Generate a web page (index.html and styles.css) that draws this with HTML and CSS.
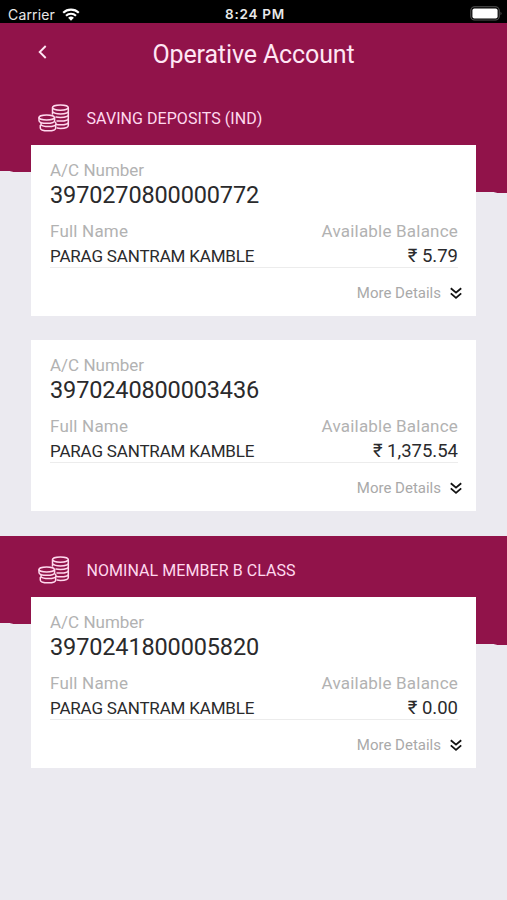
FILE: index.html
```html
<!DOCTYPE html>
<html lang="en">
<head>
<meta charset="utf-8">
<title>Operative Account</title>
<link rel="stylesheet" href="styles.css">
</head>
<body>
<svg class="defs" aria-hidden="true">
  <symbol id="coins" viewBox="0 0 32 28">
    <g fill="none" stroke="currentColor" stroke-width="1.500" stroke-linecap="round">
      <ellipse cx="22.400" cy="3.600" rx="7.900" ry="2.600"/>
      <path d="M14.500 4v6M30.300 4v17.500c0 1.700-3.400 2.900-7.900 2.900-1.200 0-2.300-.1-3.200-.3M14.600 7.700c1.200 1.400 4.200 2.200 7.800 2.200 4.400 0 7.900-1.200 7.900-2.900M18 13.100c1.300.3 2.800.4 4.400.4 4.400 0 7.900-1.200 7.900-2.900M19 16.900c1 .2 2.200.2 3.400.2 4.400 0 7.900-1.200 7.900-2.900M18.500 20.600c1.200.2 2.500.2 3.900.2 4.400 0 7.900-1.200 7.900-2.900"/>
      <ellipse cx="8.700" cy="13.500" rx="7.700" ry="2.500"/>
      <path d="M1 13.800v2.600c0 1.700 3.500 2.900 7.900 2.900s7.700-1.200 7.700-2.900v-2.600M3 18.600v2.200c1.300 1.200 4 1.800 7.100 1.800 4.400 0 7.900-1.200 7.900-2.900 0-.8-.5-1.500-1.400-2M2.300 21.400v2.500c0 1.700 3.500 2.900 7.900 2.900s7.500-1.200 7.500-2.900v-2.500"/>
    </g>
  </symbol>
  <symbol id="more" viewBox="0 0 12 13">
    <path d="M.8 1.200l5.200 4.400 5.200-4.400M.8 6.400l5.200 4.500 5.200-4.500" fill="none" stroke="currentColor" stroke-width="1.800"/>
  </symbol>
</svg>

<div class="status">
  <div class="carrier"><span>Carrier</span>
    <svg class="wifi" viewBox="0 0 18 13"><g fill="none" stroke="currentColor" stroke-width="2.100"><path d="M1.200 4.700a11.300 11.300 0 0 1 15.600 0M4 7.800a7.300 7.300 0 0 1 10 0"/></g><path d="M9 12.700l-2.900-2.900a4.200 4.200 0 0 1 5.800 0z" fill="currentColor"/></svg>
  </div>
  <time class="clock">8:24 PM</time>
  <svg class="battery" viewBox="0 0 32 15"><rect x=".8" y=".8" width="28.400" height="13.200" rx="3.800" fill="none" stroke="#555" stroke-width="1.100"/><rect x="2.400" y="2.600" width="25.200" height="9.800" rx="2" fill="#fff"/><path d="M30.600 5.500q1.600 1.900 0 3.800z" fill="#666"/></svg>
</div>

<header class="header">
  <svg class="back" viewBox="0 0 9 14"><path d="M7.700 1L1.700 7l6 6" fill="none" stroke="currentColor" stroke-width="1.900"/></svg>
  <h1 class="title">Operative Account</h1>
</header>

<main>
  <section class="group">
    <div class="group-head"><svg class="coins"><use href="#coins"/></svg><h2 class="group-title">SAVING DEPOSITS (IND)</h2></div>
    <article class="card">
      <div class="label ac">A/C Number</div>
      <div class="number">3970270800000772</div>
      <div class="row labels"><span class="label">Full Name</span><span class="label">Available Balance</span></div>
      <div class="row values"><span class="owner">PARAG SANTRAM KAMBLE</span><span class="amount">₹ 5.79</span></div>
      <div class="details"><span>More Details</span><svg class="more"><use href="#more"/></svg></div>
    </article>
    <article class="card">
      <div class="label ac">A/C Number</div>
      <div class="number">3970240800003436</div>
      <div class="row labels"><span class="label">Full Name</span><span class="label">Available Balance</span></div>
      <div class="row values"><span class="owner">PARAG SANTRAM KAMBLE</span><span class="amount">₹ 1,375.54</span></div>
      <div class="details"><span>More Details</span><svg class="more"><use href="#more"/></svg></div>
    </article>
  </section>
  <section class="group">
    <div class="group-head"><svg class="coins"><use href="#coins"/></svg><h2 class="group-title">NOMINAL MEMBER B CLASS</h2></div>
    <article class="card">
      <div class="label ac">A/C Number</div>
      <div class="number">3970241800005820</div>
      <div class="row labels"><span class="label">Full Name</span><span class="label">Available Balance</span></div>
      <div class="row values"><span class="owner">PARAG SANTRAM KAMBLE</span><span class="amount">₹ 0.00</span></div>
      <div class="details"><span>More Details</span><svg class="more"><use href="#more"/></svg></div>
    </article>
  </section>
</main>
</body>
</html>
```
FILE: styles.css
```css
* { box-sizing: border-box; }
body {
  margin: 0;
  min-height: 900px;
  background: #ebeaf0;
  color: #2a2a2c;
  font-family: Roboto, "Noto Sans", sans-serif;
}
svg { display: block; }
h1, h2 { margin: 0; font-weight: 400; }
.defs { position: absolute; width: 0; height: 0; }

.status {
  display: grid;
  grid-template-columns: 1fr auto 1fr;
  align-items: center;
  height: 23px;
  padding: 4px 5px 0 8px;
  background: #000;
  color: #e8e8e8;
  font: 14px/19px Inter, sans-serif;
}
.carrier { display: flex; align-items: center; gap: 7px; letter-spacing: .15px; }
.wifi { width: 18px; height: 13px; color: #fff; }
.clock { padding-top: 1px; font-size: 13.500px; font-weight: 600; letter-spacing: .75px; }
.battery { justify-self: end; width: 32px; height: 15px; margin-top: -2px; }

.header {
  display: grid;
  grid-template-columns: 60px 1fr 60px;
  height: 61px;
  background: #91134a;
  color: #ffe6f4;
}
.back { width: 9px; height: 14px; margin: 22px 0 0 38px; }
.title {
  padding-top: 16px;
  text-align: center;
  font-size: 25px;
  line-height: 32px;
  letter-spacing: -.12px;
}

.group {
  padding: 0 31px 25px;
  background: linear-gradient(#91134a, #91134a) 0 0 / 100% 87px no-repeat,
    linear-gradient(to top right, transparent 49.800%, #91134a 50.200%) 0 87px / 100% 22px no-repeat;
}
.group-head {
  display: flex;
  align-items: center;
  height: 61px;
  padding: 7px 0 0 7px;
  color: #ffd9ee;
}
.coins { width: 32px; height: 28px; margin: -1px 16.500px 0 0; }
.group-title { padding-top: 2px; font-size: 16px; line-height: 20px; letter-spacing: .06px; }

.card {
  height: 171px;
  width: 445px;
  padding: 15px 18px 0 19px;
  background: #fff;
}
.card + .card { margin-top: 24px; }
.label { color: #b2b2b2; font-size: 17px; line-height: 20px; letter-spacing: .2px; }
.ac { letter-spacing: 0; }
.number { padding-top: 1px; font-size: 23.500px; line-height: 28px; letter-spacing: -.14px; }
.row { display: flex; justify-content: space-between; }
.labels { margin-top: 12px; }
.values { height: 27px; border-bottom: 1px solid #ececec; line-height: 31px; }
.owner { font-size: 17px; letter-spacing: -.18px; }
.amount { font-size: 18.500px; }
.details {
  display: flex;
  justify-content: flex-end;
  align-items: center;
  gap: 9px;
  margin: 15px -4px 0 0;
  color: #a9a9a9;
  font-size: 15px;
  line-height: 20px;
}
.more { width: 12px; height: 13px; color: #111; }
```
